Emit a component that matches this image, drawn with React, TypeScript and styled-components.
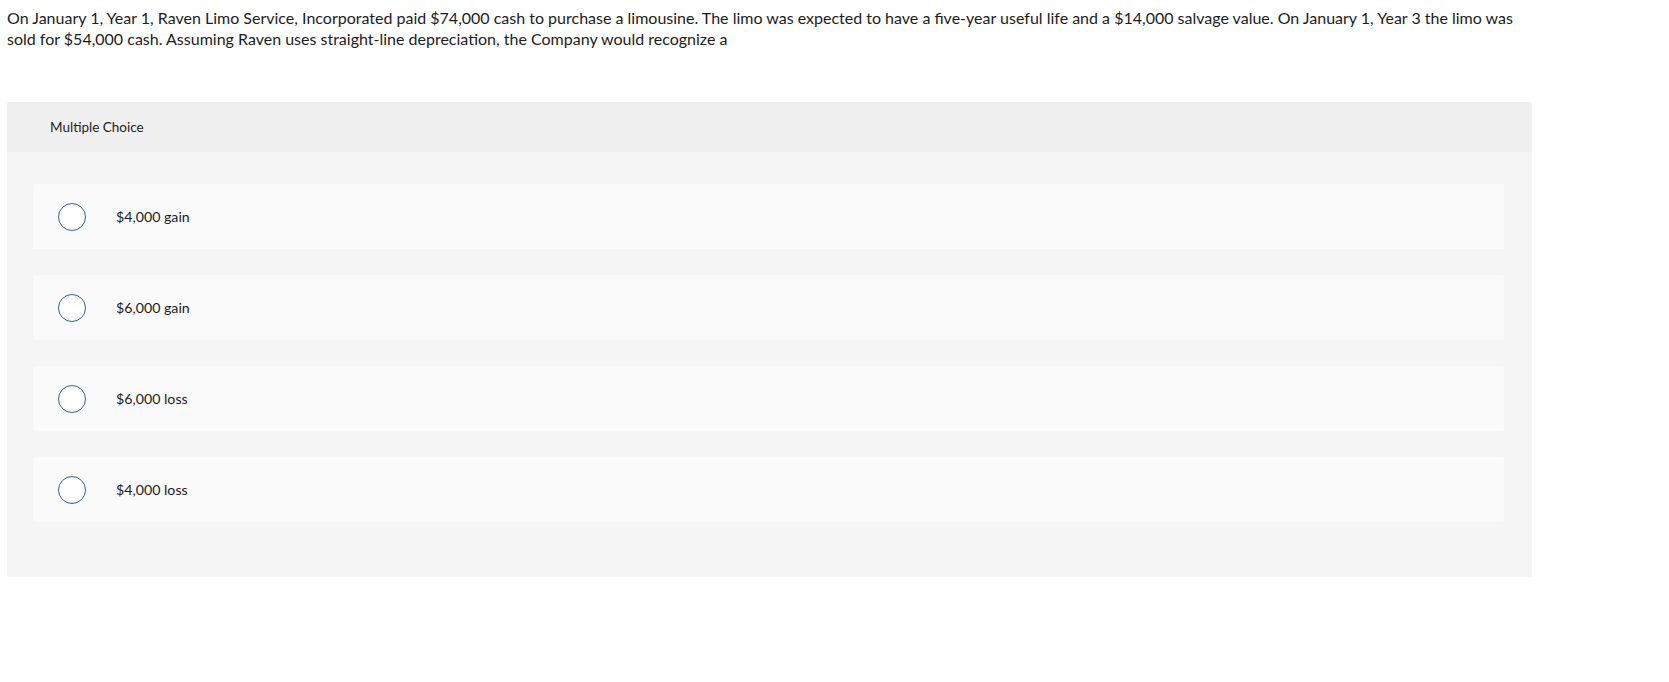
import React, { useState } from 'react'
import styled, { createGlobalStyle } from 'styled-components'

const GlobalStyle = createGlobalStyle`
  html, body {
    margin: 0;
    padding: 0;
    background: #ffffff;
  }
  body {
    font-family: Lato, "Open Sans", "Liberation Sans", sans-serif;
    color: #1c1c1c;
  }
`

/* 页面 */
const Page = styled.div`
  padding: 7px 137px 0 7px;
`

const Question = styled.p`
  margin: 0 0 53px;
  font-size: 16px;
  line-height: 21px;
  width: 1525px;
`

const Panel = styled.section`
  width: 1525px;
  background: #f5f5f5;
  border-radius: 3px;
  overflow: hidden;
`

const PanelHeader = styled.div`
  height: 50px;
  display: flex;
  align-items: center;
  padding-left: 43px;
  background: #f0f0f0;
  font-size: 13.5px;
  color: #222;
`

const Options = styled.div`
  display: flex;
  flex-direction: column;
  gap: 26px;
  padding: 32px 28px 55px 26px;
`

const Option = styled.label<{ $checked: boolean }>`
  height: 65px;
  display: flex;
  align-items: center;
  padding-left: 25px;
  background: ${p => (p.$checked ? '#eef4fa' : '#fafafa')};
  border-radius: 3px;
  cursor: pointer;
  font-size: 14.2px;
  color: #1c1c1c;
`

const Radio = styled.span<{ $checked: boolean }>`
  width: 28px;
  height: 28px;
  box-sizing: border-box;
  border-radius: 50%;
  border: 1.3px solid #2a6399;
  background: #fff;
  margin-right: 30px;
  flex-shrink: 0;
  display: flex;
  align-items: center;
  justify-content: center;

  &::after {
    content: '';
    width: 14px;
    height: 14px;
    border-radius: 50%;
    background: #2a6399;
    display: ${p => (p.$checked ? 'block' : 'none')};
  }
`

const choices = ['$4,000 gain', '$6,000 gain', '$6,000 loss', '$4,000 loss']

export default function App() {
  const [picked, setPicked] = useState<number | null>(null)

  return (
    <>
      <GlobalStyle />
      <Page>
        <Question>
          On January 1, Year 1, Raven Limo Service, Incorporated paid $74,000 cash to purchase a limousine. The limo was
          expected to have a five-year useful life and a $14,000 salvage value. On January 1, Year 3 the limo was sold
          for $54,000 cash. Assuming Raven uses straight-line depreciation, the Company would recognize a
        </Question>
        <Panel>
          <PanelHeader>Multiple Choice</PanelHeader>
          <Options>
            {choices.map((c, i) => (
              <Option key={c} $checked={picked === i} onClick={() => setPicked(i)}>
                <Radio $checked={picked === i} />
                {c}
              </Option>
            ))}
          </Options>
        </Panel>
      </Page>
    </>
  )
}
